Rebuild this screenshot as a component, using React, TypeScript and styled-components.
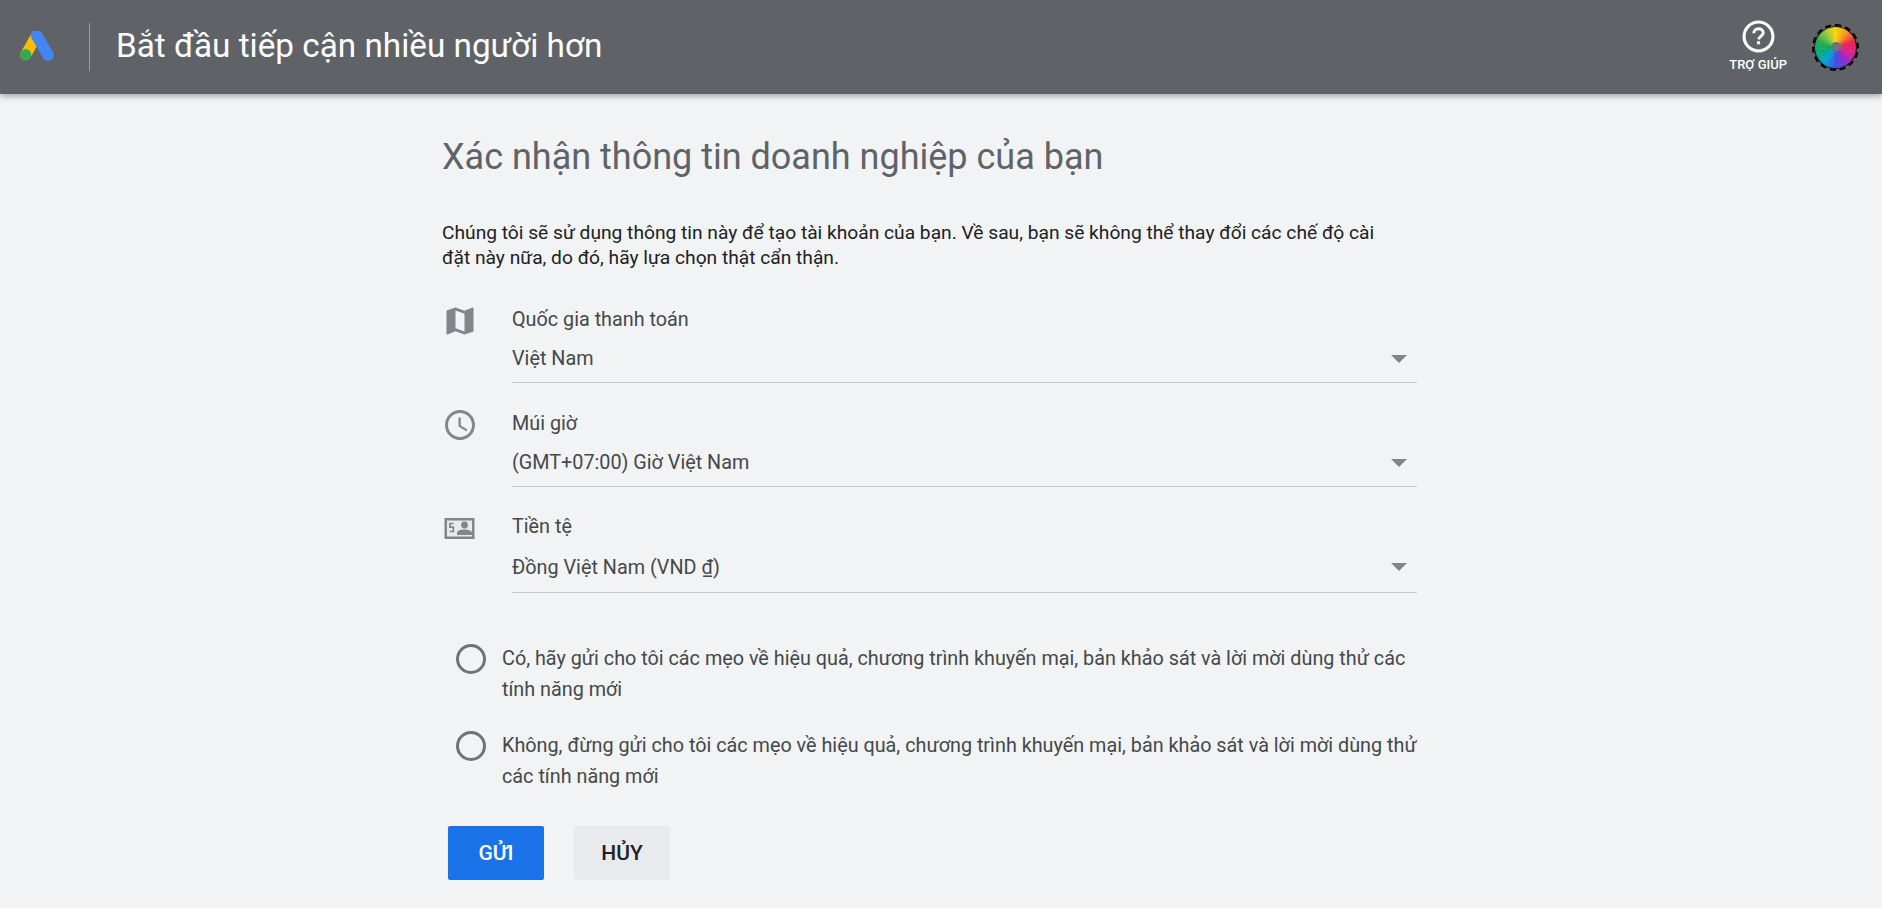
import styled, { createGlobalStyle } from 'styled-components';

const GlobalStyle = createGlobalStyle`
  html, body {
    margin: 0;
    padding: 0;
    background: #f1f3f4;
    font-family: Roboto, "Liberation Sans", sans-serif;
  }
`;

const Page = styled.div`
  width: 1882px;
  height: 908px;
  overflow: hidden;
  background: #f1f3f4;
`;

const Header = styled.header`
  height: 94px;
  background: #5f6368;
  display: flex;
  align-items: center;
  padding: 0 23px 0 20px;
  box-shadow: 0 2px 6px rgba(60, 64, 67, 0.45);
`;

const Divider = styled.div`
  width: 1px;
  height: 48px;
  background: #9a9da0;
  margin: 0 26px 0 33px;
`;

const Title = styled.h1`
  flex: 1;
  margin: 0 0 4px;
  font-size: 33.3px;
  font-weight: 400;
  color: #fff;
`;

const HelpButton = styled.div`
  display: flex;
  flex-direction: column;
  align-items: center;
  color: #fff;
  margin-right: 25px;
  padding-bottom: 2px;
`;

const HelpLabel = styled.span`
  font-size: 13px;
  font-weight: 500;
  margin-top: 4px;
`;

const Avatar = styled.div`
  width: 47px;
  height: 47px;
  border-radius: 50%;
  border: 2px dashed #000;
  box-shadow: inset 0 0 0 1px #111;
  box-sizing: border-box;
  display: flex;
  align-items: center;
  justify-content: center;
  background-clip: padding-box;
  background-image:
    repeating-conic-gradient(rgba(255, 255, 255, 0.07) 0 4deg, transparent 4deg 8deg),
    conic-gradient(#ffd400, #f7941d, #ed1c4a, #d81e8c, #8e24c8, #3a4fe0, #00a0d8, #00a878, #20a84a, #8cc63f, #ffd400);
`;

const AvatarCore = styled.div`
  width: 10px;
  height: 10px;
  box-sizing: border-box;
  border-radius: 50%;
  border: 2px solid #4a7a9a;
  background: #8a6a70;
`;

const Main = styled.main`
  width: 975px;
  margin-left: 442px;
  padding-top: 41px;
`;

const Heading = styled.h2`
  margin: 0;
  font-size: 36px;
  font-weight: 400;
  line-height: 44px;
  color: #5f6368;
`;

const Intro = styled.p`
  max-width: 950px;
  margin: 41px 0 0;
  font-size: 19.2px;
  line-height: 25px;
  color: #202124;
`;

const FieldList = styled.div`
  margin-top: 33px;
`;

const FieldRow = styled.div<{ $height: number }>`
  display: flex;
  height: ${(p) => p.$height}px;
`;

const FieldIcon = styled.div`
  width: 70px;
  flex: none;
  color: #80868b;
`;

const Field = styled.div`
  flex: 1;
`;

const FieldLabel = styled.div`
  font-size: 19.8px;
  line-height: 24px;
  color: #45484c;
  padding-top: 5px;
`;

const Select = styled.div<{ $height: number }>`
  height: ${(p) => p.$height}px;
  box-sizing: border-box;
  padding-top: 3px;
  display: flex;
  align-items: center;
  justify-content: space-between;
  border-bottom: 1px solid #c8cacc;
  font-size: 19.8px;
  color: #45484c;
`;

const Caret = styled.span`
  width: 0;
  height: 0;
  margin-right: 10px;
  border-left: 8px solid transparent;
  border-right: 8px solid transparent;
  border-top: 8px solid #80868b;
`;

const RadioList = styled.div`
  margin: 31px -8px 0 0;
  padding-left: 14px;
`;

const RadioRow = styled.label`
  display: flex;
  gap: 16px;
  margin-bottom: 26px;
`;

const RadioCircle = styled.span`
  flex: none;
  width: 30px;
  height: 30px;
  box-sizing: border-box;
  border: 3px solid #6f7276;
  border-radius: 50%;
`;

const RadioText = styled.span`
  margin-top: -1px;
  font-size: 19.8px;
  line-height: 31px;
  color: #45484c;
`;

const Actions = styled.div`
  display: flex;
  gap: 30px;
  margin: 34px 0 0 6px;
`;

const Button = styled.button<{ $primary?: boolean }>`
  width: 96px;
  height: 54px;
  border: none;
  border-radius: 2px;
  font-family: inherit;
  font-size: 21px;
  font-weight: 500;
  background: ${(p) => (p.$primary ? '#1a73e8' : '#e8eaed')};
  color: ${(p) => (p.$primary ? '#fff' : '#202124')};
`;

function AdsLogo() {
  return (
    <svg width="36" height="32" viewBox="0 0 36 32">
      <path d="M5.7 23.7 L16.7 4.5" stroke="#fbbc04" strokeWidth="11" strokeLinecap="round" />
      <path d="M16.7 4.5 L28 24" stroke="#4285f4" strokeWidth="11.5" strokeLinecap="round" />
      <circle cx="5.7" cy="23.7" r="5.6" fill="#34a853" />
    </svg>
  );
}

function HelpIcon() {
  return (
    <svg width="33" height="33" viewBox="0 0 32 32" fill="none">
      <circle cx="16" cy="16" r="14" stroke="#fff" strokeWidth="3" />
      <path d="M11.4 12.8c0-2.6 2-4.3 4.6-4.3s4.6 1.6 4.6 3.9c0 3-3.6 3.3-4.6 6.4" stroke="#fff" strokeWidth="2.8" />
      <rect x="14.5" y="20.6" width="3" height="3" fill="#fff" />
    </svg>
  );
}

function MapIcon() {
  return (
    <svg width="36" height="36" viewBox="0 0 24 24" fill="currentColor">
      <path d="M20.5 3l-.16.03L15 5.1 9 3 3.36 4.9c-.21.07-.36.25-.36.48V20.5c0 .28.22.5.5.5l.16-.03L9 18.9l6 2.1 5.64-1.9c.21-.07.36-.25.36-.48V3.5c0-.28-.22-.5-.5-.5zM15 19l-6-2.11V5l6 2.11V19z" />
    </svg>
  );
}

function ClockIcon() {
  return (
    <svg width="36" height="36" viewBox="0 0 24 24" fill="currentColor">
      <path d="M11.99 2C6.47 2 2 6.48 2 12s4.47 10 9.99 10C17.52 22 22 17.52 22 12S17.52 2 11.99 2zM12 20c-4.42 0-8-3.58-8-8s3.58-8 8-8 8 3.58 8 8-3.58 8-8 8zm.5-13H11v6l5.25 3.15.75-1.23-4.5-2.67z" />
    </svg>
  );
}

function CurrencyIcon() {
  return (
    <svg width="36" height="36" viewBox="0 0 36 36" fill="none">
      <rect x="2.5" y="8" width="30" height="21" fill="#80868b" />
      <rect x="5" y="10.5" width="25" height="16" fill="#e9eaec" />
      <path d="M11.5 13.5h-3.6v3.6h3.4v4.4h-3.6" stroke="#80868b" strokeWidth="1.7" />
      <circle cx="22.5" cy="15" r="3.4" fill="#80868b" />
      <path d="M15 25v-2.4c0-2 4.4-3.2 7.5-3.2s7.5 1.2 7.5 3.2V25z" fill="#80868b" />
    </svg>
  );
}

const fields = [
  { label: 'Quốc gia thanh toán', value: 'Việt Nam', icon: <MapIcon />, height: 104, selectHeight: 51 },
  { label: 'Múi giờ', value: '(GMT+07:00) Giờ Việt Nam', icon: <ClockIcon />, height: 103, selectHeight: 51 },
  { label: 'Tiền tệ', value: 'Đồng Việt Nam (VND ₫)', icon: <CurrencyIcon />, height: 103, selectHeight: 54 },
];

const options = [
  'Có, hãy gửi cho tôi các mẹo về hiệu quả, chương trình khuyến mại, bản khảo sát và lời mời dùng thử các tính năng mới',
  'Không, đừng gửi cho tôi các mẹo về hiệu quả, chương trình khuyến mại, bản khảo sát và lời mời dùng thử các tính năng mới',
];

export default function App() {
  return (
    <Page>
      <GlobalStyle />
      <Header>
        <AdsLogo />
        <Divider />
        <Title>Bắt đầu tiếp cận nhiều người hơn</Title>
        <HelpButton>
          <HelpIcon />
          <HelpLabel>TRỢ GIÚP</HelpLabel>
        </HelpButton>
        <Avatar>
          <AvatarCore />
        </Avatar>
      </Header>
      <Main>
        <Heading>Xác nhận thông tin doanh nghiệp của bạn</Heading>
        <Intro>
          Chúng tôi sẽ sử dụng thông tin này để tạo tài khoản của bạn. Về sau, bạn sẽ không thể thay đổi các chế độ cài
          đặt này nữa, do đó, hãy lựa chọn thật cẩn thận.
        </Intro>
        <FieldList>
          {fields.map((f) => (
            <FieldRow key={f.label} $height={f.height}>
              <FieldIcon>{f.icon}</FieldIcon>
              <Field>
                <FieldLabel>{f.label}</FieldLabel>
                <Select $height={f.selectHeight}>
                  {f.value}
                  <Caret />
                </Select>
              </Field>
            </FieldRow>
          ))}
        </FieldList>
        <RadioList>
          {options.map((o) => (
            <RadioRow key={o}>
              <RadioCircle />
              <RadioText>{o}</RadioText>
            </RadioRow>
          ))}
        </RadioList>
        <Actions>
          <Button $primary>GỬI</Button>
          <Button>HỦY</Button>
        </Actions>
      </Main>
    </Page>
  );
}
